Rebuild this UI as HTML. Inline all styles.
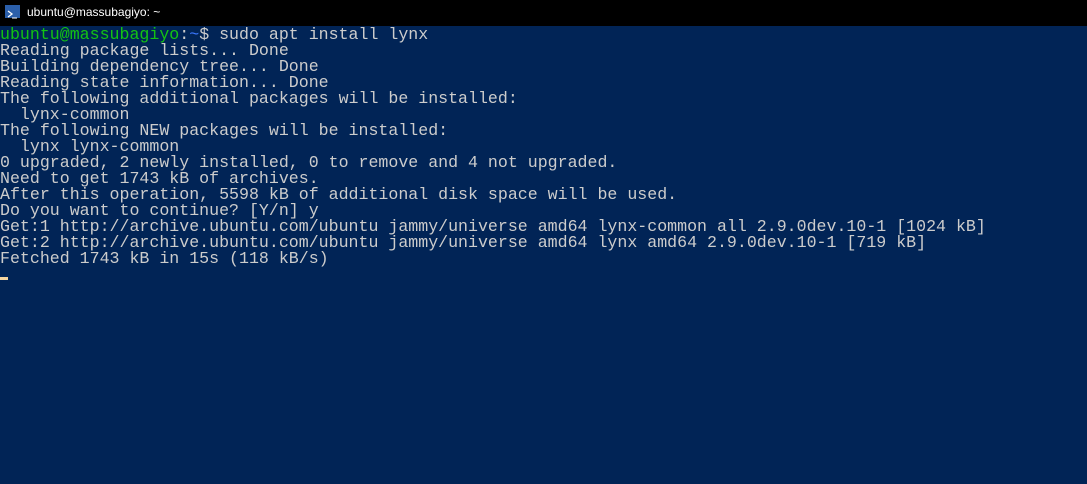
<!DOCTYPE html>
<html><head><style>
body{margin:0;width:1087px;height:484px;background:#012456;overflow:hidden;font-family:"Liberation Mono",monospace;}
.tb{height:26px;background:#000;color:#fff;font-family:"Liberation Sans",sans-serif;font-size:12px;line-height:24px;position:relative}
.tb span{position:absolute;left:27px;top:0}
.ic{position:absolute;left:5px;top:5px;width:15px;height:13px;background:#2b5faa}
pre{margin:0;color:#ccc;font-family:"Liberation Mono",monospace;font-size:16.6px;line-height:16px;letter-spacing:0;padding-top:1px;}
.g{color:#13c313}.b{color:#3b78ff}
.cur{position:absolute;left:0;top:277px;width:8px;height:3px;background:#f5d5a0}
</style></head><body>
<div class="tb"><div class="ic"><svg width="15" height="13"><path d="M3 3l4 3-4 3" stroke="#fff" fill="none" stroke-width="1.3"/><path d="M7 10h5" stroke="#fff"/></svg></div><span>ubuntu@massubagiyo: ~</span></div>
<pre><span class="g">ubuntu@massubagiyo</span>:<span class="b">~</span>$ sudo apt install lynx
Reading package lists... Done
Building dependency tree... Done
Reading state information... Done
The following additional packages will be installed:
  lynx-common
The following NEW packages will be installed:
  lynx lynx-common
0 upgraded, 2 newly installed, 0 to remove and 4 not upgraded.
Need to get 1743 kB of archives.
After this operation, 5598 kB of additional disk space will be used.
Do you want to continue? [Y/n] y
Get:1 http://archive.ubuntu.com/ubuntu jammy/universe amd64 lynx-common all 2.9.0dev.10-1 [1024 kB]
Get:2 http://archive.ubuntu.com/ubuntu jammy/universe amd64 lynx amd64 2.9.0dev.10-1 [719 kB]
Fetched 1743 kB in 15s (118 kB/s)</pre>
<div class="cur"></div>
</body></html>
